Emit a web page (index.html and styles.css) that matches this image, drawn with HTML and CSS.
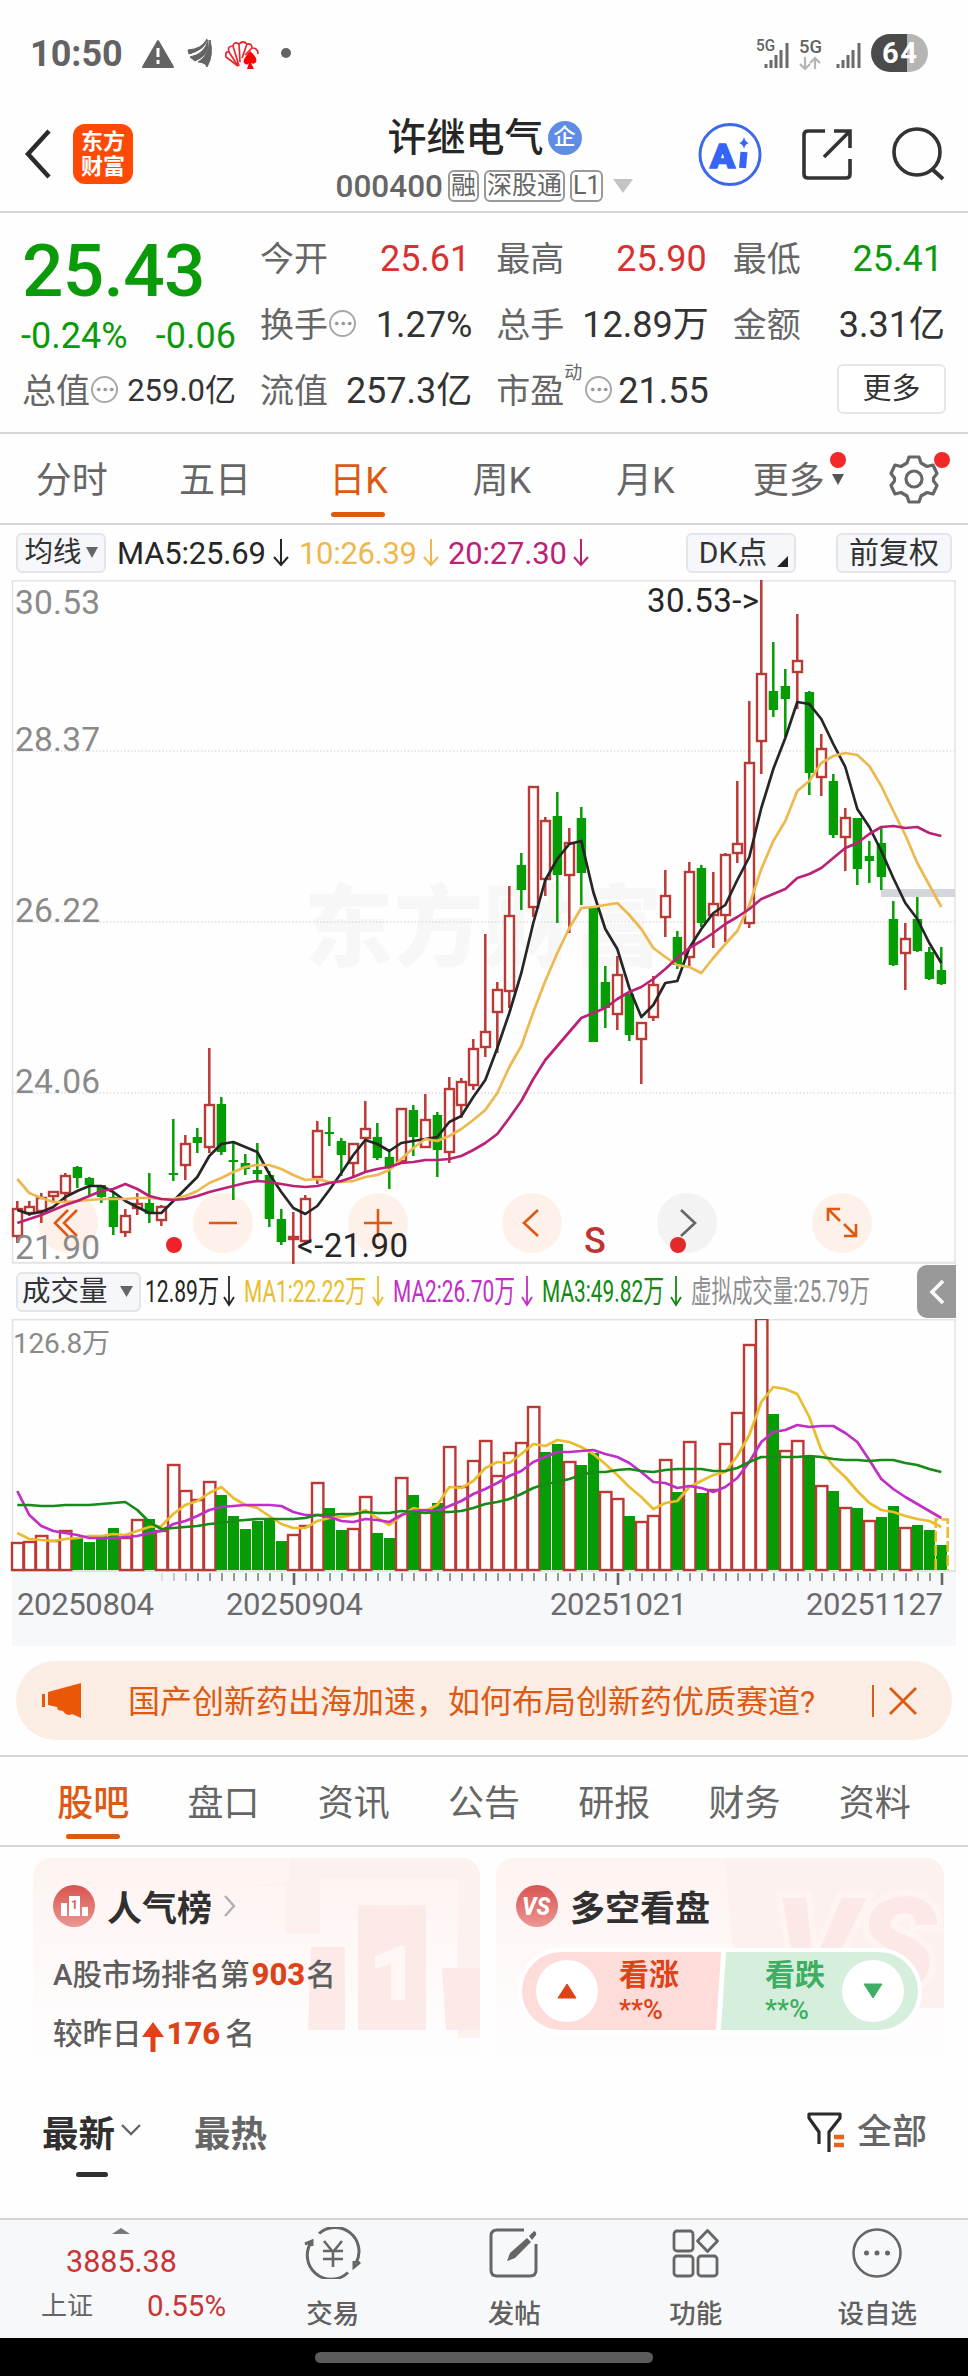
FILE: index.html
```html
<!DOCTYPE html>
<html lang="zh-CN">
<head>
    <meta charset="UTF-8">
    <meta name="viewport" content="width=device-width, initial-scale=1.0">
    <title>许继电气 000400</title>
    <link rel="stylesheet" href="styles.css">
</head>
<body>
    <div class="status-bar">
        <span class="clock">10:50</span>
        <svg class="status-icons" width="160" height="44" viewBox="138 32 160 44">
            <path d="M158 41l15 26h-30z" fill="#636363" stroke="#636363" stroke-width="2" stroke-linejoin="round"/>
            <path d="M158 48v9M158 60v4" stroke="#fff" stroke-width="3"/>
            <path d="M188 50q14-1 19-11q-1 10-18 15zM190 57q15-3 18-17q2 15-13 21zM198 62q10-5 12-22q4 15-3 27q-1-4-8-5z" fill="#636363" stroke="#636363"/>
            <g fill="none" stroke="#e8262e" stroke-width="1.700">
                <path d="M238 66l-12-9q-1-6 3-5q-2-6 4-6q1-5 6-2q4-4 8 0q5-1 5 4q6 0 6 6"/>
                <path d="M238 66l-9-14M239 66l-6-20M240 62l-1-18M242 58l5-14M245 55l7-7"/>
            </g>
            <path d="M250 51q-8 9-6 12q3 3 5 0l-2 6h7l-3-6q3 2 5-1q2-4-6-11z" fill="#f00"/>
            <circle cx="286" cy="53" r="5" fill="#636363"/>
        </svg>
        <svg class="status-net" width="176" height="44" viewBox="754 32 176 44">
            <g fill="#636363" font-weight="500">
                <text x="756" y="51" font-size="16" textLength="19" lengthAdjust="spacingAndGlyphs">5G</text>
                <text x="799" y="53" font-size="18" textLength="23" lengthAdjust="spacingAndGlyphs">5G</text>
            </g>
            <path d="M766 64v4M771 60v8M776 55v13M781 50v18M787 43v25M838 64v4M843 60v8M848 55v13M853 50v18M859 43v25" stroke="#6b6b6b" stroke-width="3"/>
            <path d="M805 57v12M800 64l5 5l5-5M815 69v-11M810 63l5-5l5 5" fill="none" stroke="#b5b5b5" stroke-width="2.200"/>
            <path d="M890 34h17v38h-17a19 19 0 0 1 0-38z" fill="#4b4b4b"/>
            <path d="M907 34h2a19 19 0 0 1 0 38h-2z" fill="#b5b5b5"/>
            <text x="882" y="63" font-size="29" font-weight="700" fill="#fff" textLength="35">64</text>
        </svg>
    </div>

    <header class="header">
        <div class="header-side">
            <svg width="30" height="50" viewBox="0 0 30 50"><path d="M27 2L6 25l21 23" fill="none" stroke="#2b2b2b" stroke-width="4.500"/></svg>
            <div class="logo"><span>东方</span><span>财富</span></div>
        </div>
        <div class="stock">
            <div class="stock-name">许继电气<span class="badge">企</span></div>
            <div class="stock-code">
                <b>000400</b>
                <span class="tag">融</span><span class="tag">深股通</span><span class="tag">L1</span>
                <svg class="code-caret" width="20" height="14" viewBox="0 0 20 14"><path d="M0 0h20L10 14z" fill="#c4c4c4"/></svg>
            </div>
        </div>
        <div class="header-side header-actions">
            <svg width="66" height="66" viewBox="697 120 66 66">
                <circle cx="730" cy="153.500" r="30" fill="#fff" stroke="#3d68ee" stroke-width="3"/>
                <text x="710" y="167" font-size="34" font-weight="900" fill="#3565f7" stroke="#3565f7" stroke-width="1.500" textLength="25" lengthAdjust="spacingAndGlyphs">A</text>
                <path d="M744 151l-1.500 16" stroke="#3565f7" stroke-width="7"/>
                <path d="M744 136q1 5 5 6q-4 1-5 6q-1-5-5-6q4-1 5-6z" fill="#3565f7"/>
            </svg>
            <svg width="56" height="56" viewBox="798 125 56 56">
                <path d="M824 130h-17q-4 0-4 4v39q0 4 4 4h38q4 0 4-4v-15M833 130h16v17M848 131l-25 25" fill="none" stroke="#333" stroke-width="3.600"/>
            </svg>
            <svg width="56" height="56" viewBox="889 125 56 56">
                <circle cx="915" cy="151" r="23" fill="none" stroke="#333" stroke-width="3.600"/>
                <path d="M930 168l11 10" stroke="#333" stroke-width="4"/>
            </svg>
        </div>
    </header>

    <section class="quote">
        <div class="quote-main">
            <div class="price">25.43</div>
            <div class="change"><span>-0.24%</span><span>-0.06</span></div>
            <div class="cell small"><label>总值<i class="hint"></i></label><span>259.0亿</span></div>
        </div>
        <div class="quote-grid">
            <div class="cell"><label>今开</label><span class="up">25.61</span></div>
            <div class="cell"><label>最高</label><span class="up">25.90</span></div>
            <div class="cell"><label>最低</label><span class="down">25.41</span></div>
            <div class="cell"><label>换手<i class="hint"></i></label><span>1.27%</span></div>
            <div class="cell"><label>总手</label><span>12.89万</span></div>
            <div class="cell"><label>金额</label><span>3.31亿</span></div>
            <div class="cell"><label>流值</label><span>257.3亿</span></div>
            <div class="cell"><label>市盈<sup>动</sup><i class="hint"></i></label><span>21.55</span></div>
            <div class="cell cell-end"><button class="more-button">更多</button></div>
        </div>
    </section>

    <nav class="chart-tabs">
        <a>分时</a>
        <a>五日</a>
        <a class="active">日K</a>
        <a>周K</a>
        <a>月K</a>
        <a class="has-caret">更多<svg width="12" height="11" viewBox="0 0 12 11"><path d="M0 0h12L6 11z" fill="#555"/></svg><i class="dot"></i></a>
        <a class="settings">
            <svg width="50" height="50" viewBox="-25 -25 50 50">
                <path d="M-5-22h10l2 6l6 3.500l6-1.500l4 8.500l-3.500 4.500v3l3.500 4.500l-4 8.500l-6-1.500l-6 3.500l-2 6h-10l-2-6l-6-3.500l-6 1.500l-4-8.500l3.500-4.500v-3l-3.500-4.500l4-8.500l6 1.500l6-3.500z" fill="none" stroke="#666" stroke-width="3.200" stroke-linejoin="round"/>
                <circle r="8" fill="none" stroke="#666" stroke-width="3.200"/>
            </svg>
            <i class="dot"></i>
        </a>
    </nav>

    <div class="ma-row">
        <button class="chip">均线<svg width="12" height="11" viewBox="0 0 12 11"><path d="M0 0h12L6 11z" fill="#666"/></svg></button>
        <svg class="ma-legend" width="480" height="40" viewBox="116 532 480 40" font-size="31">
            <g fill="#262626" stroke="#262626">
                <text x="117" y="563" textLength="149" stroke="none">MA5:25.69</text>
                <path d="M281 538v25M274 556l7 8l7-8" fill="none" stroke-width="2"/>
            </g>
            <g fill="#edb84f" stroke="#edb84f">
                <text x="299" y="563" textLength="118" stroke="none">10:26.39</text>
                <path d="M431 538v25M424 556l7 8l7-8" fill="none" stroke-width="2"/>
            </g>
            <g fill="#bb2277" stroke="#bb2277">
                <text x="448" y="563" textLength="119" stroke="none">20:27.30</text>
                <path d="M581 538v25M574 556l7 8l7-8" fill="none" stroke-width="2"/>
            </g>
        </svg>
        <button class="chip chip-dk">DK点<svg width="11" height="11" viewBox="0 0 11 11"><path d="M11 0v11H0z" fill="#222"/></svg></button>
        <button class="chip chip-wide">前复权</button>
    </div>

    <svg id="kline" class="kline" width="968" height="684" viewBox="0 580 968 684">
        <text x="304" y="959" class="watermark" textLength="358">东方财富</text>
        <path d="M12 751h943M12 922h943M12 1093h943" stroke="#dedede" stroke-width="1.500" stroke-dasharray="1.500 2"/>
        <path d="M12.500 580v683M955 580v683" stroke="#e3e3e3" stroke-width="1.500"/>
        <path d="M12 580.500h944M12 1262.700h944" stroke="#e3e3e3" stroke-width="2"/>
        <path d="M881 893h74" stroke="#d3d6da" stroke-width="8"/>
        <g fill="#fef1ea">
            <circle cx="68" cy="1223" r="30"/>
            <circle cx="223" cy="1223" r="30"/>
            <circle cx="378" cy="1223" r="30"/>
            <circle cx="532" cy="1223" r="30"/>
            <circle cx="687" cy="1223" r="30" fill="#f3f3f3"/>
            <circle cx="842" cy="1223" r="30"/>
        </g>
        <g id="candles"></g>
        <g class="axis-label">
            <text x="15" y="614" textLength="85">30.53</text>
            <text x="15" y="751" textLength="85">28.37</text>
            <text x="15" y="922" textLength="85">26.22</text>
            <text x="15" y="1093" textLength="85">24.06</text>
            <text x="15" y="1259" textLength="85">21.90</text>
        </g>
        <g fill="none" stroke="#dc5a14" stroke-width="2.600">
            <path d="M68 1210l-13 13l13 13M77 1210l-13 13l13 13M209 1223h28M364 1223h28M378 1209v28M538 1210l-14 13l14 13"/>
            <path d="M828 1221v-12h12M828 1209l12 12M856 1224v12h-12M856 1236l-12-12"/>
            <path d="M681 1210l14 13l-14 13" stroke="#666"/>
        </g>
        <circle cx="174" cy="1245" r="8" fill="#ee2228"/>
        <circle cx="678" cy="1245" r="8" fill="#e22a2a"/>
        <text x="584" y="1253" class="sell-mark">S</text>
        <g class="extreme-label">
            <text x="647" y="612" textLength="112">30.53-&gt;</text>
            <text x="297" y="1257" textLength="111">&lt;-21.90</text>
        </g>
    </svg>

    <div class="volume-row">
        <button class="chip">成交量<svg width="13" height="11" viewBox="0 0 13 11"><path d="M0 0h13L6.500 11z" fill="#666"/></svg></button>
        <svg class="volume-legend" width="730" height="40" viewBox="144 1272 730 40" font-size="31">
            <text x="145" y="1302" textLength="74" lengthAdjust="spacingAndGlyphs" fill="#262626">12.89万</text>
            <text x="244" y="1302" textLength="122" lengthAdjust="spacingAndGlyphs" fill="#e9bd2b">MA1:22.22万</text>
            <text x="393" y="1302" textLength="122" lengthAdjust="spacingAndGlyphs" fill="#c02fc6">MA2:26.70万</text>
            <text x="542" y="1302" textLength="122" lengthAdjust="spacingAndGlyphs" fill="#128a12">MA3:49.82万</text>
            <text x="691" y="1302" textLength="179" lengthAdjust="spacingAndGlyphs" fill="#8f8f8f">虚拟成交量:25.79万</text>
            <g fill="none" stroke-width="1.800">
                <path d="M229 1276v28M224 1297l5 8l5-8" stroke="#262626"/>
                <path d="M378 1276v28M373 1297l5 8l5-8" stroke="#e9bd2b"/>
                <path d="M527 1276v28M522 1297l5 8l5-8" stroke="#c02fc6"/>
                <path d="M676 1276v28M671 1297l5 8l5-8" stroke="#128a12"/>
            </g>
        </svg>
        <button class="collapse"><svg width="16" height="26" viewBox="0 0 16 26"><path d="M14 2L3 13l11 11" fill="none" stroke="#fff" stroke-width="3.500"/></svg></button>
    </div>

    <svg class="volume" width="968" height="328" viewBox="0 1319 968 328">
        <rect x="12" y="1572" width="944" height="74" fill="#f7f8fb"/>
        <path d="M12.500 1319v252M955 1319v252" stroke="#e3e3e3" stroke-width="1.500"/>
        <path d="M12 1319.500h944M12 1571h944" stroke="#e3e3e3" stroke-width="1.800"/>
        <text x="13" y="1353" font-size="28" fill="#8a8a8a" textLength="97">126.8万</text>
        <g id="volumes"></g>
        <g id="ticks"></g>
        <g font-size="31" fill="#6b6b6b">
            <text x="17" y="1615" textLength="137">20250804</text>
            <text x="226" y="1615" textLength="137">20250904</text>
            <text x="550" y="1615" textLength="137">20251021</text>
            <text x="806" y="1615" textLength="137">20251127</text>
        </g>
    </svg>

    <div class="notice">
        <svg width="40" height="36" viewBox="0 0 40 36"><path d="M0 11h3v13H0zM6 9L39 0v35l-9-4q-5 3-9-3l-5-1l-1-3l-9-2z" fill="#eb5708"/></svg>
        <span class="notice-text">国产创新药出海加速，如何布局创新药优质赛道?</span>
        <span class="notice-close"><svg width="30" height="28" viewBox="0 0 30 28"><path d="M2 1l26 26M28 1L2 27" stroke="#dc5a14" stroke-width="2.800"/></svg></span>
    </div>

    <nav class="info-tabs">
        <a class="active">股吧</a>
        <a>盘口</a>
        <a>资讯</a>
        <a>公告</a>
        <a>研报</a>
        <a>财务</a>
        <a>资料</a>
    </nav>

    <section class="cards">
        <div class="card">
            <svg class="card-bg" width="230" height="210" viewBox="0 0 230 210">
                <path d="M40 0h190v180H208V20H70v55H35V28H0l40-5z" fill="#fdf1ef"/>
                <path d="M108 47h68v125h-68zM61 89h34v83H58zM192 110h38v62h-34z" fill="#fceae8"/>
                <path d="M125 98l27-11l3 2v53h-14v-36l-16 5z" fill="#fff7f5"/>
            </svg>
            <div class="card-title">
                <svg width="42" height="42" viewBox="0 0 42 42">
                    <defs><linearGradient id="round" x2="0" y2="1"><stop stop-color="#d9534f"/><stop offset="1" stop-color="#eb9794"/></linearGradient></defs>
                    <circle cx="21" cy="21" r="21" fill="url(#round)"/>
                    <path d="M8 18h6v13H8zM16 11h11v20H16zM29 22h6v9h-6z" fill="#fff"/>
                    <text x="18" y="24" font-size="12" font-weight="700" fill="#d9615d">1</text>
                </svg>
                <span>人气榜</span>
                <svg width="12" height="22" viewBox="0 0 12 22"><path d="M1 1l9 10l-9 10" fill="none" stroke="#b0b0b0" stroke-width="2.400"/></svg>
            </div>
            <p class="card-line">A股市场排名第<b>903</b>名</p>
            <p class="card-line">较昨日<svg width="22" height="30" viewBox="0 0 22 30"><path d="M11 0l11 15H13.500v15h-5V15H0z" fill="#de4318"/></svg><b>176</b><span class="rank-unit">名</span></p>
        </div>
        <div class="card">
            <svg class="card-bg" width="220" height="210" viewBox="0 0 220 210">
                <path d="M0 0h220v150H15z" fill="#fdf1ef"/>
                <text x="50" y="132" font-size="130" font-weight="900" font-style="italic" fill="#fce8e6" stroke="#fef5f3" stroke-width="12" paint-order="stroke">VS</text>
            </svg>
            <div class="card-title">
                <svg width="42" height="42" viewBox="0 0 42 42">
                    <circle cx="21" cy="21" r="21" fill="url(#round)"/>
                    <text x="6" y="30" font-size="25" font-weight="800" font-style="italic" fill="#fff" textLength="28" lengthAdjust="spacingAndGlyphs">VS</text>
                </svg>
                <span>多空看盘</span>
            </div>
            <div class="vote">
                <div class="vote-side bull">
                    <i class="vote-button"><svg width="20" height="16" viewBox="0 0 20 16"><path d="M10 1l9 14H1z" fill="#de4318" stroke="#de4318" stroke-linejoin="round"/></svg></i>
                    <div class="vote-text"><span>看涨</span><small>**%</small></div>
                </div>
                <div class="vote-side bear">
                    <div class="vote-text"><span>看跌</span><small>**%</small></div>
                    <i class="vote-button"><svg width="20" height="16" viewBox="0 0 20 16"><path d="M10 15L1 1h18z" fill="#3fae63" stroke="#3fae63" stroke-linejoin="round"/></svg></i>
                </div>
            </div>
        </div>
    </section>

    <div class="feed-bar">
        <a class="feed-tab active">最新<svg width="20" height="12" viewBox="0 0 20 12"><path d="M1 1l9 9l9-9" fill="none" stroke="#666" stroke-width="2.400"/></svg></a>
        <a class="feed-tab">最热</a>
        <a class="feed-filter">
            <svg width="38" height="42" viewBox="0 0 38 42">
                <path d="M12 32V20L2 6V2h31v4L22 20v20" fill="none" stroke="#2b2b2b" stroke-width="3.200" stroke-linejoin="round"/>
                <path d="M27 25h10M27 33h10" stroke="#ea6420" stroke-width="4.500"/>
            </svg>
            全部
        </a>
    </div>

    <footer class="bottom-nav">
        <div class="index">
            <svg width="18" height="6" viewBox="0 0 18 6"><path d="M9 0l9 6H0z" fill="#777"/></svg>
            <div class="index-value">3885.38</div>
            <div class="index-row"><span>上证</span><span class="index-change">0.55%</span></div>
        </div>
        <a class="nav-item">
            <svg width="58" height="52" viewBox="-29 -26 58 52" fill="none" stroke="#666" stroke-width="3">
                <path d="M-14-19.500A24 24 0 0 1 23 10M27 9l-6 5v-6M15 19.500A24 24 0 0 1-21-12M-28-9l7-3v5"/>
                <path d="M-9-12l9 11l9-11M0-1v15M-10-2h20M-10 6h20" stroke-width="2.600"/>
            </svg>
            <span>交易</span>
        </a>
        <a class="nav-item">
            <svg width="58" height="52" viewBox="-29 -26 58 52" fill="none" stroke="#666" stroke-width="3">
                <path d="M10-23h-27q-6 0-6 6v34q0 6 6 6h33q6 0 6-6v-26"/>
                <path d="M-7 8l3-8L13-15l4 4L1 5zM15-17l5-5q3 1 2 4l-4 5z" fill="#666" stroke="none"/>
            </svg>
            <span>发帖</span>
        </a>
        <a class="nav-item">
            <svg width="58" height="52" viewBox="-29 -26 58 52" fill="none" stroke="#666" stroke-width="2.800">
                <rect x="-22" y="-22" width="19" height="20" rx="3"/>
                <rect x="-22" y="3" width="19" height="20" rx="3"/>
                <rect x="2" y="3" width="19" height="20" rx="3"/>
                <path d="M11.500-22.500l10 10.500l-10 10.500l-10-10.500z" stroke-linejoin="round"/>
            </svg>
            <span>功能</span>
        </a>
        <a class="nav-item">
            <svg width="58" height="52" viewBox="-29 -26 58 52">
                <circle r="23.500" fill="none" stroke="#666" stroke-width="2.600"/>
                <path d="M-10.500 0h.01M0 0h.01M10.500 0h.01" stroke="#666" stroke-width="5" stroke-linecap="round"/>
            </svg>
            <span>设自选</span>
        </a>
    </footer>
    <div class="home-bar"><i></i></div>

    <script src="chart.js"></script>
</body>
</html>
```
FILE: styles.css
```css
:root {
    --up: #d93030;
    --down: #0a9a0a;
    --accent: #dc5a14;
    --text: #333;
    --text-secondary: #666;
    --line: #d6d6d6;
}

* {
    margin: 0;
    padding: 0;
    box-sizing: border-box;
}

body {
    width: 968px;
    height: 2376px;
    overflow: hidden;
    background-color: #fefefe;
    color: var(--text);
    font-family: Roboto, "Noto Sans CJK SC", sans-serif;
    display: flex;
    flex-direction: column;
}

body > * {
    flex-shrink: 0;
}

svg {
    display: block;
    flex-shrink: 0;
}

i {
    font-style: normal;
}

button {
    font-family: inherit;
    color: var(--text);
}

/* Status bar */
.status-bar {
    height: 96px;
    padding: 12px 38px 0 30px;
    display: flex;
    align-items: center;
}

.clock {
    width: 108px;
    font-size: 36px;
    font-weight: 700;
    color: #636363;
}

.status-net {
    margin-left: auto;
}

/* Header */
.header {
    height: 117px;
    padding: 0 21px 0 22px;
    border-bottom: 2px solid var(--line);
    display: flex;
    justify-content: space-between;
}

.header-side {
    width: 250px;
    height: 115px;
    display: flex;
    align-items: center;
}

.header-side .logo {
    margin-left: 21px;
}

.logo {
    width: 60px;
    height: 60px;
    border-radius: 12px;
    background-color: #ff4a05;
    color: #fff;
    font-size: 22px;
    line-height: 25px;
    font-weight: 700;
    display: flex;
    flex-direction: column;
    align-items: center;
    justify-content: center;
}

.header-actions {
    justify-content: space-between;
}

.stock {
    padding-top: 19px;
    display: flex;
    flex-direction: column;
    align-items: center;
}

.stock-name {
    height: 46px;
    font-size: 39px;
    line-height: 46px;
    font-weight: 500;
    color: #262626;
    display: flex;
    align-items: center;
}

.badge {
    width: 34px;
    height: 34px;
    margin-left: 4px;
    border-radius: 50%;
    background-color: #5f8de6;
    color: #fff;
    font-size: 22px;
    line-height: 32px;
    text-align: center;
}

.stock-code {
    height: 50px;
    color: var(--text-secondary);
    display: flex;
    align-items: center;
    gap: 5px;
}

.stock-code b {
    font-size: 31.5px;
    font-weight: 500;
}

.tag {
    height: 32px;
    padding: 0 1px;
    border: 2px solid #999;
    border-radius: 6px;
    font-size: 25px;
    line-height: 27px;
}

.code-caret {
    margin-left: 5px;
}

/* Quote */
.quote {
    height: 221px;
    padding: 13px 23px 0 24px;
    border-bottom: 2px solid var(--line);
    display: flex;
    gap: 24px;
}

.quote-main {
    width: 212px;
}

.price {
    height: 85px;
    margin-left: -2px;
    font-size: 73px;
    line-height: 90px;
    font-weight: 500;
    letter-spacing: -0.7px;
    color: var(--down);
}

.change {
    height: 47px;
    margin-left: -3px;
    line-height: 51px;
    font-size: 36px;
    color: var(--down);
    display: flex;
    justify-content: space-between;
}

.quote-grid {
    flex: 1;
    display: grid;
    grid-template-columns: repeat(3, 1fr);
    grid-auto-rows: 66px;
    column-gap: 24px;
}

.cell {
    height: 66px;
    line-height: 66px;
    font-size: 36px;
    white-space: nowrap;
    display: flex;
    align-items: center;
    justify-content: space-between;
}

.cell label {
    font-size: 34px;
    color: var(--text-secondary);
    display: flex;
    align-items: center;
}

.cell.small label {
    margin-left: -2px;
}

.cell.small span {
    font-size: 31px;
}

.cell sup {
    align-self: flex-start;
    width: 20px;
    font-size: 18px;
    line-height: 30px;
}

.cell .up,
.cell .down {
    margin-right: 2px;
}

.cell .up {
    color: var(--up);
}

.cell .down {
    color: var(--down);
}

.cell-end {
    justify-content: flex-end;
}

.hint {
    width: 27px;
    height: 27px;
    margin: -4px 0 0 1px;
    border: 2px solid #a8a8a8;
    border-radius: 50%;
    background: radial-gradient(circle, #999 1.6px, transparent 2.2px) 0.5px 0 / 6.5px 23px repeat-x;
    background-origin: content-box;
    background-clip: content-box;
    padding: 0 2px;
}

.more-button {
    width: 109px;
    height: 50px;
    margin: -4px -1px 0 0;
    border: 2px solid #e6e6e6;
    border-radius: 6px;
    background-color: #fff;
    font-size: 29px;
    line-height: 40px;
}

/* Chart tabs */
.chart-tabs {
    height: 91px;
    border-bottom: 2px solid var(--line);
    color: var(--text-secondary);
    font-size: 36px;
    display: flex;
}

.chart-tabs a {
    position: relative;
    width: 143.4px;
    line-height: 94px;
    display: flex;
    justify-content: center;
}

.chart-tabs .active::after,
.info-tabs .active::after {
    content: "";
    position: absolute;
    left: 50%;
    bottom: 6px;
    width: 54px;
    height: 5px;
    margin-left: -27px;
    border-radius: 3px;
    background-color: var(--accent);
}

.active {
    color: var(--accent);
}

.chart-tabs .has-caret svg {
    position: absolute;
    left: 115px;
    top: 40px;
}

.chart-tabs .settings {
    width: 107px;
    align-items: center;
}

.dot {
    position: absolute;
    width: 16px;
    height: 16px;
    border-radius: 50%;
    background-color: #f02828;
}

.has-caret .dot {
    left: 113px;
    top: 18px;
}

.settings .dot {
    left: 74px;
    top: 18px;
}

/* Indicator rows */
.ma-row {
    height: 55px;
    padding: 0 16px;
    display: flex;
    align-items: center;
}

.chip {
    height: 40px;
    padding: 0 8px;
    border: 2px solid #e4e5e9;
    border-radius: 6px;
    background-color: #f6f7fa;
    font-size: 28.5px;
    line-height: 34px;
    white-space: nowrap;
    display: flex;
    align-items: center;
    justify-content: center;
    gap: 4px;
}

.ma-row .chip {
    width: 90px;
}

.ma-legend {
    margin-left: 10px;
}

.ma-row .chip-dk {
    width: 110px;
    margin-left: auto;
    padding-right: 3px;
    gap: 10px;
    font-size: 30px;
}

.chip-dk svg {
    align-self: flex-end;
    margin-bottom: 4px;
}

.ma-row .chip-wide {
    width: 116px;
    margin-left: 40px;
    font-size: 30px;
}

.volume-row {
    height: 55px;
    padding: 0 12px 0 16px;
    display: flex;
    align-items: center;
}

.volume-row .chip {
    width: 125px;
    padding: 0 6px 0 4px;
    justify-content: space-between;
}

.volume-legend {
    margin-left: 3px;
}

.collapse {
    width: 39px;
    height: 53px;
    margin-left: auto;
    border: 0;
    border-radius: 10px 0 0 10px;
    background-color: #999;
    display: flex;
    align-items: center;
    justify-content: center;
}

/* Charts */
.watermark {
    font-size: 89px;
    font-weight: 900;
    fill: #f7f7f7;
}

.axis-label {
    font-size: 33.5px;
    fill: #8a8a8a;
}

.extreme-label {
    font-size: 33px;
    fill: #262626;
}

.sell-mark {
    font-size: 36px;
    font-weight: 500;
    fill: #be3430;
}

/* Notice */
.notice {
    width: 936px;
    height: 79px;
    margin: 14px 16px 15px;
    padding: 0 34px 0 26px;
    border-radius: 40px;
    background-color: #fcede4;
    color: var(--accent);
    display: flex;
    align-items: center;
}

.notice-text {
    margin: -4px 0 0 46px;
    font-size: 32px;
    white-space: nowrap;
}

.notice-close {
    height: 32px;
    margin-left: auto;
    padding-left: 14px;
    border-left: 2px solid var(--accent);
    display: flex;
    align-items: center;
}

/* Info tabs */
.info-tabs {
    height: 92px;
    padding: 0 28px;
    border-top: 2px solid var(--line);
    border-bottom: 2px solid var(--line);
    color: var(--text-secondary);
    font-size: 36px;
    display: flex;
}

.info-tabs a {
    position: relative;
    flex: 1;
    line-height: 94px;
    text-align: center;
}

.info-tabs .active {
    font-weight: 500;
}

/* Cards */
.cards {
    height: 222px;
    padding: 11px 24px 0 33px;
    display: grid;
    grid-template-columns: 447px 448px;
    gap: 16px;
}

.card {
    position: relative;
    height: 210px;
    padding: 0 21px 0 20px;
    border-radius: 18px;
    background: linear-gradient(#fef3f1, #fefafa 60%, #fefefe);
    overflow: hidden;
}

.card > * {
    position: relative;
}

.card .card-bg {
    position: absolute;
    right: 0;
    top: 0;
}

.card-title {
    height: 95px;
    color: #303030;
    font-size: 35px;
    font-weight: 700;
    display: flex;
    align-items: center;
    gap: 12px;
}

.card-line {
    height: 60px;
    margin-top: -8px;
    color: #5e5e5e;
    font-size: 29.5px;
    line-height: 60px;
    font-weight: 500;
    display: flex;
    align-items: center;
}

.card-line + .card-line {
    margin-top: -1px;
}

.card-line b {
    margin: 0 1px 0 2px;
    color: #de4318;
    font-size: 31px;
    font-weight: 800;
}

.card-line svg {
    margin: 6px 1px 0 0;
}

.rank-unit {
    margin-left: 4px;
}

.vote {
    width: 404px;
    height: 86px;
    margin: -5px 0 0 2px;
    border: 4px solid #fff;
    border-radius: 43px;
    background-color: #fff;
    overflow: hidden;
    display: flex;
}

.vote-side {
    height: 78px;
    display: flex;
    align-items: center;
}

.bull {
    width: 199px;
    padding-left: 14px;
    gap: 21px;
    background-color: #fddcd9;
    color: #de4318;
    clip-path: polygon(0 0, 100% 0, calc(100% - 5px) 100%, 0 100%);
}

.bear {
    width: 197px;
    padding-right: 14px;
    justify-content: flex-end;
    gap: 17px;
    background-color: #d5efdc;
    color: #3fae63;
    clip-path: polygon(5px 0, 100% 0, 100% 100%, 0 100%);
}

.vote-button {
    width: 62px;
    height: 62px;
    border-radius: 50%;
    background-color: #fff;
    display: flex;
    align-items: center;
    justify-content: center;
}

.vote-text {
    display: flex;
    flex-direction: column;
}

.vote-text span {
    font-size: 30px;
    line-height: 38px;
    font-weight: 700;
}

.vote-text small {
    font-size: 27px;
    line-height: 32px;
    font-weight: 500;
}

/* Feed bar */
.feed-bar {
    height: 149px;
    padding: 26px 41px 0 42px;
    font-size: 36.5px;
    line-height: 72px;
    font-weight: 700;
    color: var(--text-secondary);
    display: flex;
}

.feed-tab {
    position: relative;
    height: 80px;
    margin-right: 53px;
    display: flex;
    align-items: center;
    gap: 6px;
}

.feed-tab.active {
    color: #303030;
}

.feed-tab svg {
    margin-top: -10px;
}

.feed-tab.active::after {
    content: "";
    position: absolute;
    left: 34px;
    bottom: -2px;
    width: 32px;
    height: 5px;
    border-radius: 3px;
    background-color: #303030;
}

.feed-filter {
    height: 76px;
    margin-left: auto;
    font-size: 35px;
    font-weight: 500;
    display: flex;
    align-items: center;
    gap: 12px;
}

/* Bottom nav */
.bottom-nav {
    height: 120px;
    border-top: 2px solid var(--line);
    background-color: #f7f8fa;
    display: flex;
}

.index {
    width: 242px;
    padding: 8px 17px 0 41px;
    color: #c93434;
}

.index svg {
    margin-left: 71px;
}

.index-value {
    margin-left: 25px;
    font-size: 30.5px;
    line-height: 56px;
}

.index-row {
    font-size: 29.5px;
    line-height: 32px;
    display: flex;
    justify-content: space-between;
}

.index-row span:first-child {
    color: var(--text-secondary);
    font-size: 26px;
}

.index-change {
    margin-right: -1px;
}

.nav-item {
    flex: 1;
    padding-top: 7px;
    color: #606060;
    font-size: 26.5px;
    line-height: 42px;
    font-weight: 500;
    display: flex;
    flex-direction: column;
    align-items: center;
    gap: 14px;
}

.home-bar {
    height: 39px;
    background-color: #000;
    display: flex;
    justify-content: center;
}

.home-bar i {
    width: 338px;
    height: 11px;
    margin-top: 14px;
    border-radius: 6px;
    background-color: #5c5c5c;
}
```
FILE: chart.js
```js
const STEP = 12;
const START = 17.3;
const RED = '#bb3a36';
const GREEN = '#059c05';

// [direction, high, body top, body bottom, low]
const candles = [
    ['r', 1201, 1209, 1236, 1243], ['r', 1201, 1207, 1213, 1216], ['r', 1193, 1198, 1211, 1223], ['r', 1191, 1192, 1196, 1202],
    ['r', 1173, 1176, 1193, 1201], ['g', 1166, 1167, 1178, 1188], ['g', 1177, 1178, 1185, 1196], ['g', 1185, 1185, 1197, 1203],
    ['g', 1193, 1197, 1227, 1235], ['r', 1209, 1216, 1232, 1237], ['r', 1193, 1204, 1208, 1215], ['g', 1173, 1203, 1214, 1223],
    ['r', 1205, 1207, 1220, 1226], ['g', 1119, 1173, 1175, 1181], ['r', 1135, 1144, 1165, 1180], ['g', 1128, 1137, 1143, 1153],
    ['r', 1048, 1105, 1147, 1153], ['g', 1097, 1104, 1152, 1155], ['g', 1142, 1160, 1162, 1200], ['g', 1154, 1163, 1169, 1175],
    ['g', 1143, 1170, 1174, 1181], ['g', 1171, 1175, 1219, 1227], ['g', 1209, 1219, 1242, 1245], ['r', 1212, 1237, 1239, 1264],
    ['r', 1195, 1199, 1241, 1245], ['r', 1121, 1131, 1177, 1184], ['g', 1117, 1132, 1134, 1146], ['g', 1138, 1141, 1155, 1176],
    ['r', 1144, 1144, 1163, 1177], ['r', 1101, 1129, 1138, 1171], ['g', 1123, 1137, 1158, 1160], ['g', 1149, 1157, 1167, 1189],
    ['r', 1109, 1109, 1161, 1164], ['g', 1105, 1110, 1137, 1156], ['r', 1094, 1120, 1147, 1147], ['g', 1112, 1115, 1150, 1177],
    ['r', 1077, 1089, 1152, 1163], ['r', 1078, 1082, 1105, 1118], ['r', 1039, 1049, 1085, 1090], ['r', 934, 1032, 1047, 1057],
    ['r', 982, 990, 1012, 1053], ['r', 886, 916, 991, 1008], ['g', 853, 865, 890, 910], ['r', 787, 787, 907, 917],
    ['r', 817, 821, 879, 896], ['g', 792, 816, 875, 923], ['r', 828, 843, 875, 933], ['g', 807, 818, 873, 905],
    ['g', 908, 908, 1042, 1042], ['g', 966, 982, 1008, 1028], ['r', 956, 975, 1014, 1030], ['g', 994, 994, 1035, 1041],
    ['r', 1022, 1023, 1039, 1084], ['r', 976, 985, 1017, 1021], ['r', 870, 896, 917, 937], ['g', 931, 937, 965, 969],
    ['r', 862, 872, 957, 967], ['g', 865, 868, 923, 927], ['r', 872, 904, 915, 948], ['r', 853, 855, 915, 942],
    ['r', 781, 844, 853, 863], ['r', 701, 763, 923, 928], ['r', 580, 674, 741, 774], ['g', 642, 691, 710, 717],
    ['g', 669, 686, 699, 737], ['r', 614, 661, 672, 709], ['g', 691, 692, 773, 795], ['r', 734, 749, 777, 796],
    ['g', 774, 781, 835, 838], ['r', 808, 818, 837, 871], ['g', 818, 818, 869, 885], ['g', 841, 856, 861, 883],
    ['g', 828, 843, 877, 890], ['g', 901, 919, 965, 966], ['r', 923, 939, 953, 990], ['g', 897, 919, 951, 952],
    ['g', 947, 952, 979, 980], ['g', 947, 970, 984, 985]
];

const priceLines = {
    '#262626': [1210, 1214, 1212, 1207, 1197, 1191, 1186, 1186, 1192, 1201, 1207, 1213, 1213, 1201, 1189, 1177, 1156, 1144, 1142, 1147, 1152, 1174, 1192, 1208, 1214, 1206, 1190, 1173, 1155, 1140, 1144, 1151, 1143, 1141, 1139, 1137, 1122, 1116, 1097, 1080, 1048, 1013, 973, 923, 880, 859, 844, 841, 892, 929, 949, 988, 1017, 1005, 983, 981, 948, 929, 913, 905, 880, 857, 808, 769, 738, 702, 704, 719, 744, 767, 809, 827, 851, 878, 903, 919, 943, 963],
    '#edb84f': [1179, 1193, 1198, 1202, 1202, 1201, 1200, 1199, 1199, 1199, 1198, 1198, 1199, 1199, 1196, 1191, 1183, 1178, 1172, 1167, 1165, 1165, 1169, 1175, 1180, 1179, 1182, 1182, 1181, 1177, 1175, 1170, 1159, 1148, 1139, 1141, 1136, 1129, 1120, 1110, 1093, 1067, 1046, 1012, 981, 953, 928, 908, 907, 905, 903, 915, 929, 948, 957, 965, 967, 973, 958, 944, 931, 905, 869, 841, 821, 791, 781, 763, 756, 753, 755, 766, 786, 811, 835, 863, 885, 907],
    '#bb2277': [1223, 1219, 1215, 1210, 1205, 1201, 1196, 1191, 1189, 1184, 1189, 1196, 1199, 1200, 1199, 1196, 1192, 1189, 1186, 1183, 1181, 1182, 1184, 1186, 1187, 1186, 1183, 1181, 1177, 1172, 1169, 1167, 1163, 1162, 1160, 1160, 1159, 1156, 1150, 1143, 1134, 1118, 1101, 1079, 1060, 1046, 1032, 1018, 1013, 1008, 999, 992, 987, 979, 969, 958, 948, 941, 933, 924, 917, 909, 899, 894, 889, 878, 874, 868, 858, 848, 843, 834, 827, 826, 828, 827, 833, 836]
};

const volumeColors = 'rrrrrggggrrgrrrrrggggggrrrggrrggrgrgrrrrrrrrggrggrrgrrrgrgrrrrrgrrgrgrgrggrggg';
const volumeTops = [1543, 1542, 1536, 1541, 1531, 1538, 1542, 1536, 1528, 1538, 1520, 1519, 1531, 1465, 1491, 1500, 1482, 1495, 1516, 1529, 1521, 1519, 1541, 1535, 1526, 1483, 1508, 1530, 1529, 1497, 1533, 1538, 1478, 1495, 1512, 1503, 1447, 1487, 1461, 1441, 1476, 1453, 1443, 1407, 1452, 1444, 1462, 1465, 1453, 1492, 1499, 1516, 1522, 1516, 1460, 1492, 1442, 1493, 1490, 1444, 1413, 1345, 1319, 1414, 1451, 1441, 1456, 1486, 1491, 1508, 1508, 1521, 1517, 1506, 1528, 1525, 1530, 1545];

const volumeLines = {
    '#e9bd2b': [1533, 1539, 1540, 1541, 1539, 1538, 1536, 1536, 1534, 1535, 1531, 1527, 1526, 1514, 1505, 1501, 1493, 1487, 1498, 1505, 1508, 1516, 1524, 1528, 1528, 1521, 1518, 1517, 1515, 1510, 1518, 1525, 1516, 1508, 1511, 1505, 1487, 1488, 1481, 1468, 1462, 1463, 1454, 1444, 1446, 1440, 1442, 1447, 1454, 1464, 1475, 1487, 1497, 1509, 1503, 1501, 1487, 1481, 1475, 1472, 1456, 1435, 1402, 1387, 1389, 1394, 1417, 1450, 1466, 1477, 1491, 1503, 1510, 1512, 1516, 1519, 1521, 1527],
    '#c02fc6': [1491, 1515, 1526, 1531, 1533, 1535, 1538, 1538, 1538, 1537, 1536, 1533, 1531, 1524, 1521, 1516, 1510, 1507, 1506, 1505, 1505, 1505, 1506, 1512, 1515, 1515, 1517, 1521, 1522, 1519, 1520, 1522, 1515, 1511, 1510, 1511, 1506, 1501, 1494, 1489, 1483, 1476, 1471, 1462, 1457, 1452, 1452, 1451, 1450, 1454, 1457, 1463, 1472, 1482, 1483, 1488, 1486, 1488, 1492, 1487, 1478, 1462, 1442, 1432, 1430, 1425, 1427, 1426, 1426, 1433, 1442, 1460, 1479, 1489, 1497, 1504, 1511, 1518],
    '#178a17': [1505, 1505, 1506, 1506, 1505, 1505, 1505, 1504, 1503, 1502, 1510, 1522, 1529, 1528, 1527, 1526, 1524, 1523, 1521, 1520, 1519, 1519, 1519, 1519, 1518, 1515, 1515, 1514, 1514, 1512, 1513, 1513, 1511, 1512, 1513, 1512, 1512, 1511, 1508, 1504, 1502, 1499, 1494, 1488, 1484, 1482, 1479, 1475, 1472, 1472, 1470, 1469, 1471, 1472, 1470, 1469, 1469, 1469, 1471, 1471, 1468, 1462, 1457, 1457, 1457, 1457, 1456, 1457, 1459, 1460, 1460, 1461, 1460, 1460, 1463, 1465, 1469, 1472]
};

const centre = i => START + STEP * i;

function drawLines(lines) {
    return Object.entries(lines).map(([color, ys]) => {
        const points = ys.map((y, i) => `${centre(i).toFixed(1)},${y}`).join(' ');
        return `<polyline points="${points}" fill="none" stroke="${color}" stroke-width="2.700" stroke-linejoin="round"/>`;
    }).join('');
}

function drawCandle([dir, high, top, bottom, low], i) {
    const c = centre(i);
    if (dir === 'g') {
        return `<path d="M${c} ${high}V${low}" stroke="${GREEN}" stroke-width="2.500"/>
            <rect x="${c - 4.6}" y="${top}" width="9.400" height="${bottom - top}" fill="${GREEN}"/>`;
    }
    return `<path d="M${c} ${high}V${top}M${c} ${bottom}V${low}" stroke="${RED}" stroke-width="2.500"/>
        <rect x="${c - 4.3}" y="${top}" width="9" height="${bottom - top}" fill="#fff" stroke="${RED}" stroke-width="2.400"/>`;
}

function drawVolume(top, i) {
    const x = centre(i) - 5.3;
    if (volumeColors[i] === 'g') {
        return `<rect x="${x}" y="${top}" width="11" height="${1570 - top}" fill="${GREEN}"/>`;
    }
    return `<rect x="${x}" y="${top}" width="11.400" height="${1570 - top}" fill="#fff" stroke="${RED}" stroke-width="2.400"/>`;
}

function drawTicks() {
    let html = '';
    for (let i = 12; i < 78; i++) {
        const major = i === 23 || i === 50 || i === 77;
        const opacity = i < 15 ? (i - 11) * 0.25 : 1;
        html += `<path d="M${centre(i) + 0.7} 1573V${major ? 1585 : 1581}" stroke="${major ? '#666' : '#999'}" stroke-width="${major ? 2.6 : 2}" opacity="${opacity}"/>`;
    }
    return html;
}

// Dashed outline is the projected volume for the current day
const projected = '<path d="M935.700 1570V1519.500h12V1570" fill="none" stroke="#e9bd2b" stroke-width="2.600" stroke-dasharray="11 3"/>';

document.getElementById('candles').innerHTML = candles.map(drawCandle).join('') + drawLines(priceLines);
document.getElementById('volumes').innerHTML = volumeTops.map(drawVolume).join('') + projected + drawLines(volumeLines);
document.getElementById('ticks').innerHTML = drawTicks();
```
